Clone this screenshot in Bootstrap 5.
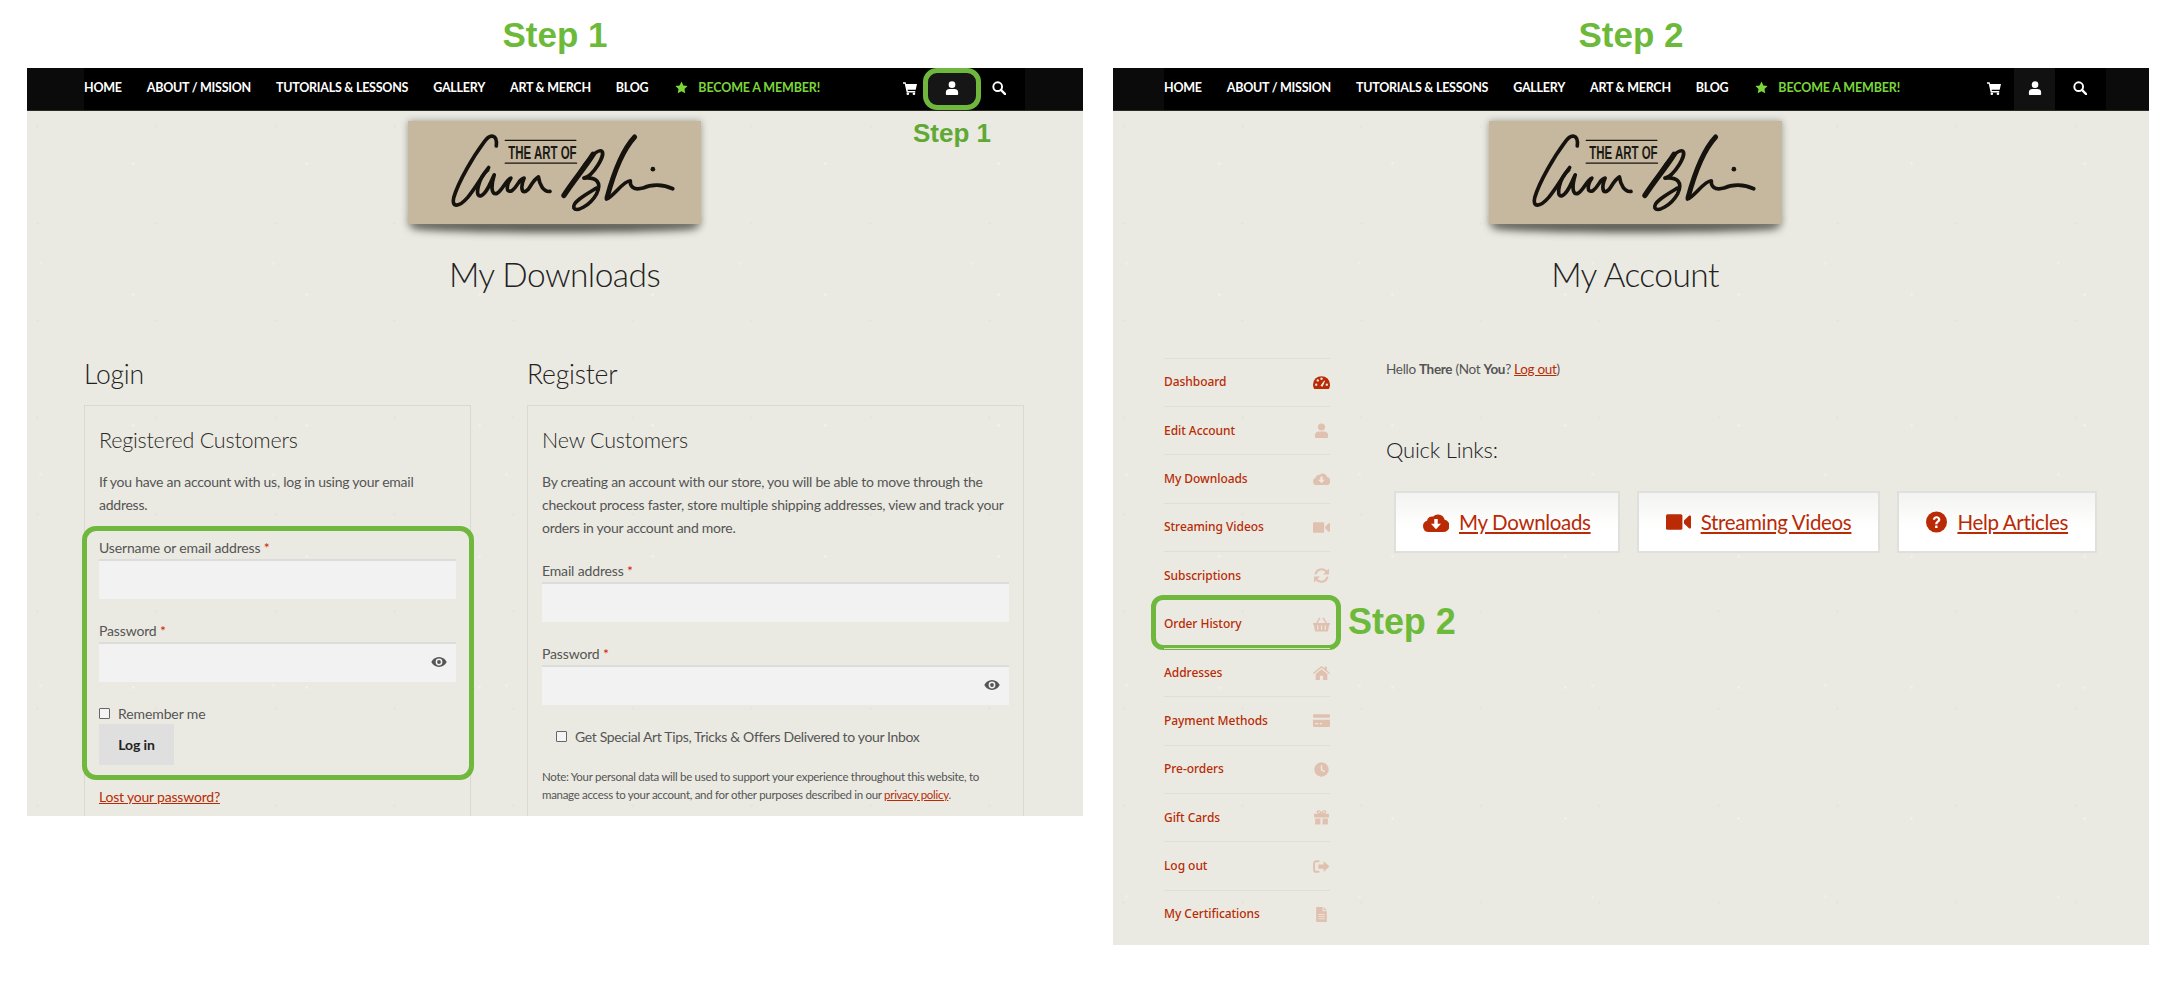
<!DOCTYPE html>
<html lang="en">
<head>
<meta charset="UTF-8">
<meta name="viewport" content="width=device-width, initial-scale=1.0">
<title>Downloads - Step 1 and Step 2</title>
<link href="https://cdn.jsdelivr.net/npm/bootstrap@5.3.3/dist/css/bootstrap.min.css" rel="stylesheet">
<style>
    body { background: #fff; font-family: Lato, sans-serif; color: #555; }
    .sheet { padding-left: 27px; gap: 30px; }
    .step-title { height: 68px; margin: 0; text-align: center; font: bold 35px/70px "Liberation Sans", sans-serif; color: #6dba3b; }
    .shot-a { width: 1056px; }
    .shot-b { width: 1036px; }
    .paper {
        background-color: #eaeae2;
        background-image: radial-gradient(circle, #f2f2eb .8px, transparent 1.6px), radial-gradient(circle, #e3e3d9 .8px, transparent 1.6px), radial-gradient(circle, #efefe7 1.2px, transparent 2px);
        background-size: 173px 131px, 119px 97px, 233px 211px;
        background-position: 20px 30px, 70px 10px, 130px 90px;
        overflow: hidden;
    }
    .shot-a .paper { height: 748px; }
    .shot-b .paper { height: 877px; }

    /* top nav */
    .site-nav { --bs-navbar-nav-link-padding-x: 0; height: 43px; background: #0b0b0b; border-bottom: 1px solid #2a2a24; align-items: stretch; padding: 0; }
    .shot-a .nav-inner { margin: 0 58px 0 57px; }
    .shot-b .nav-inner { margin: 0 43px 0 51px; }
    .nav-inner { flex: 1; background: #000; display: flex; justify-content: space-between; height: 42px; }
    .site-nav .nav-link { font-size: 12.5px; font-weight: 700; color: #fff; padding: 0; line-height: 39px; letter-spacing: -.25px; text-transform: uppercase; white-space: nowrap; }
    .site-nav .navbar-nav { gap: 25px; }
    .site-nav .nav-link.member { color: #7bd63a; display: flex; align-items: center; gap: 10px; margin-left: 2px; letter-spacing: -.15px; }
    .nav-tools { display: flex; align-items: center; height: 42px; margin-right: 6px; }
    .tool { width: 41px; height: 42px; display: flex; align-items: center; justify-content: center; color: #fff; padding-bottom: 3px; }
    .tool svg { width: 14px; height: 14px; }
    .tool:last-child { margin-left: 4px; }
    .tool-on { background: #111; }
    .tool-ring { background: #161616; border: 5px solid #6fb83d; border-radius: 14px; width: 58px; margin: 0 -7px 0 -8px; }
    .tool-lead { margin-right: 1px; }

    /* logo and titles */
    .head-a { padding: 0 58px 0 57px; }
    .head-b { padding: 0 43px 0 51px; }
    .logo-tag { position: relative; width: 293px; height: 103px; margin: 10px auto 0; background: #c6b89e; box-shadow: 0 0 7px rgba(0,0,0,.35); }
    .logo-tag::after { content: ""; position: absolute; z-index: 0; left: 3px; right: 3px; bottom: -8px; height: 10px; background: rgba(30,30,22,.8); filter: blur(4px); border-radius: 0 0 50% 50%; }
    .logo-tag svg { display: block; width: 100%; height: 100%; position: relative; z-index: 1; background: #c6b89e; }
    .logo-txt { font: bold 54px "Liberation Sans", sans-serif; fill: #1c1a16; }
    .page-title { font-weight: 300; font-size: 33.5px; line-height: 44px; color: #222; text-align: center; margin: 28px 0 0; letter-spacing: -.55px; }
    .step-note { position: absolute; left: 886px; top: 49px; font: bold 26px/32px "Liberation Sans", sans-serif; color: #5fa934; white-space: nowrap; }

    /* login / register */
    .forms { margin: 62px 58px 0 57px; gap: 56px; }
    .col-login { width: 387px; flex: none; }
    .col-reg { width: 497px; flex: none; }
    .col-head { font-weight: 300; font-size: 26.5px; line-height: 32px; color: #222; margin: 0 0 15px; letter-spacing: -.2px; }
    .box { background: transparent; border: 1px solid #d9d9cf; border-radius: 0; padding: 20px 14px 40px; }
    .box-title { font-weight: 300; font-size: 21.5px; line-height: 28px; color: #2a2a2a; margin: 0 0 15.5px; letter-spacing: -.2px; }
    .copy { font-size: 14px; line-height: 23px; margin: 0 0 20px; color: #555; letter-spacing: -.25px; }
    .fld-label { display: block; font-size: 14px; line-height: 23px; margin: 0; color: #555; letter-spacing: -.15px; }
    .req { color: #d61a0c; }
    .fld { margin-bottom: 20px; position: relative; }
    .fld .form-control { height: 40px; background: #f2f2f2; border: 0; border-top: 2px solid #dcdcdc; border-radius: 0; }
    .eye { position: absolute; right: 9px; bottom: 14px; width: 16px; height: 12px; color: #555; }
    .ring-wrap { position: relative; }
    .ring-wrap::before { content: ""; position: absolute; left: -17px; right: -18px; top: -10px; bottom: -15px; border: 5px solid #6fb83d; border-radius: 14px; pointer-events: none; }
    .tick { display: flex; align-items: center; gap: 8px; font-size: 14px; line-height: 23px; padding: 0; margin: 0; min-height: 0; letter-spacing: -.1px; }
    .tick .form-check-input { width: 11px; height: 11px; margin: 0; float: none; border: 1px solid #666; border-radius: 1px; background-color: #f4f4f4; }
    .tick-reg { margin: 0 0 20px 14px; letter-spacing: -.35px; }
    .btn-login { display: block; width: 75px; height: 41px; padding: 0; margin-top: -1px; background: #e0dfdf; border: 0; border-radius: 0; color: #222; font-size: 14px; font-weight: 700; letter-spacing: -.1px; }
    .lost { display: block; margin-top: 20px; font-size: 14px; line-height: 23px; letter-spacing: -.2px; }
    .note-txt { font-size: 11.5px; line-height: 18px; margin: 0; letter-spacing: -.3px; }
    a { color: #b92a05; }

    /* account */
    .acct { margin: 61.5px 0 0 51px; }
    .side-list { width: 166px; flex: none; }
    .side-list .list-group-item { position: relative; background: transparent; border-color: #dfdfd5; border-width: 1px 0 0; height: 48.4px; padding: 0; display: flex; align-items: center; justify-content: space-between; font-family: "Noto Sans", sans-serif; font-size: 12px; font-weight: 500; color: #b92a05; text-decoration: none; letter-spacing: -.05px; }
    .side-list .list-group-item svg { width: 17px; height: 15px; color: #e0c1b0; --cut: #eaeae2; }
    .side-list .list-group-item.on svg { color: #b92a05; }
    .item-ring { position: absolute; left: -13px; right: -11px; top: -5px; bottom: -2px; border: 5px solid #6fb83d; border-radius: 12px; pointer-events: none; }
    .item-note { position: absolute; left: 184px; top: 2px; font: bold 36px/40px "Liberation Sans", sans-serif; color: #6dba3b; white-space: nowrap; }
    .acct-main { margin-left: 56px; }
    .hello { font-size: 13.5px; line-height: 23px; margin: 0; letter-spacing: -.3px; }
    .hello b { font-weight: 700; }
    .quick-head { font-weight: 300; font-size: 22px; line-height: 30px; color: #222; margin: 54.5px 0 26px; letter-spacing: -.2px; }
    .quick-row { gap: 17px; margin-left: 8px; }
    .quick { height: 62px; padding: 0 27px; background: linear-gradient(#f3f3f1, #fff 60%); border: 2px solid #dfdfdb; color: #b92a05; display: flex; align-items: center; gap: 10px; font-size: 20.5px; letter-spacing: -.33px; white-space: nowrap; --cut: #fff; }
    .quick span { text-decoration: underline; }
    .quick svg { height: 22px; flex: none; }
    .qi-cloud { width: 26px; }
    .qi-video { width: 25px; }
    .qi-help { width: 21px; }
</style>
</head>
<body>

<svg width="0" height="0" class="position-absolute">
    <symbol id="i-user" viewBox="0 0 16 16"><circle cx="8" cy="4.2" r="3.8" fill="currentColor"/><path d="M1 15.2v-2.6C1 10.4 3 9 5 9h6c2 0 4 1.4 4 3.6v2.600c0 .4-.3.8-.8.8H1.800c-.5 0-.8-.4-.8-.8z" fill="currentColor"/></symbol>
    <symbol id="i-cart" viewBox="0 0 16 16"><path d="M0 1.500h3l.5 2H16l-1.500 6.500H5.300l.3 1.500H14V13H4.200L2 3H0z" fill="currentColor"/><circle cx="5.500" cy="14.500" r="1.500" fill="currentColor"/><circle cx="12.500" cy="14.500" r="1.500" fill="currentColor"/></symbol>
    <symbol id="i-search" viewBox="0 0 16 16"><circle cx="6.500" cy="6.500" r="5" fill="none" stroke="currentColor" stroke-width="2.200"/><path d="M10.200 10.200l4.800 4.800" stroke="currentColor" stroke-width="2.600" stroke-linecap="round"/></symbol>
    <symbol id="i-star" viewBox="0 0 16 16"><path d="M8 .5l2.300 4.900 5.200.7-3.800 3.700.9 5.400L8 12.600l-4.600 2.600.9-5.400L.5 6.100l5.200-.7z" fill="currentColor"/></symbol>
    <symbol id="i-eye" viewBox="0 0 16 12"><path d="M8 1C4.500 1 1.700 3.300.3 6c1.400 2.700 4.200 5 7.700 5s6.300-2.300 7.700-5C14.300 3.300 11.500 1 8 1z" fill="currentColor"/><circle cx="8" cy="6" r="3.400" fill="#f2f2f2"/><circle cx="8" cy="6" r="1.900" fill="currentColor"/></symbol>
    <symbol id="i-gauge" viewBox="0 0 16 14"><path d="M8 1a8 8 0 0 1 8 8c0 1.500-.4 2.900-1.100 4H1.100C.4 11.900 0 10.500 0 9a8 8 0 0 1 8-8z" fill="currentColor"/><g fill="#eaeae2"><circle cx="3" cy="9" r="1.100"/><circle cx="4.500" cy="5" r="1.100"/><circle cx="8" cy="3.500" r="1.100"/><circle cx="13" cy="9" r="1.100"/><path d="M7 10l3.500-5 .8.5L9 11z"/></g></symbol>
    <symbol id="i-cloud" viewBox="0 0 18 14"><path d="M4 14a4 4 0 0 1-1.200-7.800A3.500 3.500 0 0 1 7 3.200 4.800 4.800 0 0 1 15 5.500 4.300 4.300 0 0 1 14 14z" fill="currentColor"/><path d="M7.800 5h2.400v3.200H12.500L9 12 5.500 8.200h2.300z" fill="var(--cut)"/></symbol>
    <symbol id="i-video" viewBox="0 0 16 12"><rect x="0" y="1" width="10.500" height="10" rx="1" fill="currentColor"/><path d="M11.500 5l3.200-3c.5-.4 1.300-.1 1.300.6v6.800c0 .7-.8 1-1.300.6l-3.200-3z" fill="currentColor"/></symbol>
    <symbol id="i-sync" viewBox="0 0 16 14"><path d="M2.400 6A5.800 5.800 0 0 1 12.700 3.400" fill="none" stroke="currentColor" stroke-width="2"/><path d="M15 .5V6H9.500z" fill="currentColor"/><path d="M13.600 8A5.800 5.800 0 0 1 3.300 10.600" fill="none" stroke="currentColor" stroke-width="2"/><path d="M1 13.500V8h5.500z" fill="currentColor"/></symbol>
    <symbol id="i-basket" viewBox="0 0 16 14"><path d="M0 5.500h16v1.700h-.7L14 13.500H2L.7 7.200H0z" fill="currentColor"/><path d="M3.300 6L6.500.8M12.700 6L9.500.8" stroke="currentColor" stroke-width="1.300"/><path d="M4.500 8v4M8 8v4M11.500 8v4" stroke="var(--cut)" stroke-width="1.100"/></symbol>
    <symbol id="i-home" viewBox="0 0 16 14"><path d="M8 .8l3 2.500V1.500h2v3.400l3 2.500-.8 1L8 2.600.8 8.400l-.8-1z" fill="currentColor"/><path d="M8 4L2.500 8.500V14h4V10h3v4h4V8.500z" fill="currentColor"/></symbol>
    <symbol id="i-card" viewBox="0 0 16 14"><rect y="1" width="16" height="3.400" rx="1" fill="currentColor"/><path d="M0 6.300h16v5.700c0 .6-.4 1-1 1H1c-.6 0-1-.4-1-1z" fill="currentColor"/><path d="M2 10h3M6.500 10h2" stroke="var(--cut)" stroke-width="1.200"/></symbol>
    <symbol id="i-clock" viewBox="0 0 16 14"><circle cx="8" cy="7" r="6.800" fill="currentColor"/><path d="M8 3v4.300l3 1.700" fill="none" stroke="var(--cut)" stroke-width="1.300"/></symbol>
    <symbol id="i-gift" viewBox="0 0 16 14"><path d="M1 3.500h14v3.500H1zM2 8h5v5.500H2zM9 8h5v5.500H9z" fill="currentColor"/><path d="M8 3.500C6 3.500 4 3 4 1.700 4 .2 7 .3 8 3.500c1-3.200 4-3.300 4-1.800C12 3 10 3.500 8 3.500z" fill="none" stroke="currentColor" stroke-width="1.200"/></symbol>
    <symbol id="i-exit" viewBox="0 0 16 14"><path d="M6 2H3a2 2 0 0 0-2 2v6a2 2 0 0 0 2 2h3" fill="none" stroke="currentColor" stroke-width="1.800"/><path d="M5 5h5V1.800L15.500 7 10 12.200V9H5z" fill="currentColor"/></symbol>
    <symbol id="i-file" viewBox="0 0 16 14"><path d="M3 0h6v4h4v10H3z" fill="currentColor"/><path d="M10 0l3 3h-3z" fill="currentColor"/><path d="M5 7h6M5 9h6M5 11h6" stroke="var(--cut)" stroke-width=".8"/></symbol>
    <symbol id="i-help" viewBox="0 0 16 16"><circle cx="8" cy="8" r="8" fill="currentColor"/><path d="M5.200 6.300C5.400 4.600 6.700 3.700 8.100 3.700c1.600 0 2.800 1 2.800 2.400 0 2-2.200 2.100-2.200 3.700H7c0-2.500 2.100-2.600 2.100-3.700 0-.5-.4-.9-1-.9-.7 0-1.100.4-1.200 1.100z" fill="#fff"/><rect x="6.900" y="10.600" width="1.900" height="1.900" rx=".4" fill="#fff"/></symbol>
    <symbol id="i-sign" viewBox="82 60 883 310">
        <g fill="none" stroke="#16130f" stroke-linecap="round" stroke-linejoin="round">
            <g stroke-width="11">
                <path d="M348 135C352 100 330 95 310 125 280 165 235 240 220 290 212 322 236 320 262 290 290 255 305 225 325 200"/>
                <path d="M322 208C296 228 280 292 302 285 320 278 330 245 342 222 332 255 332 284 350 278 368 268 375 240 392 232 378 252 376 278 395 270 415 255 415 235 432 232 420 260 424 286 445 265 455 250 462 235 475 228 478 250 490 275 510 272"/>
                <path d="M600 215C620 180 650 145 665 150 680 160 640 225 612 232 650 228 668 245 650 280 630 315 590 335 582 322 575 305 620 280 650 262"/>
                <path d="M680 295C700 290 730 240 752 240 750 255 760 270 790 262 815 250 850 250 880 264"/>
            </g>
            <path d="M640 160C615 200 580 240 552 284" stroke-width="16"/>
            <path d="M765 108C735 140 705 205 682 290" stroke-width="15"/>
            <path d="M375 118H588M375 187H590" stroke-width="4"/>
        </g>
        <circle cx="820" cy="205" r="7" fill="#16130f"/>
    </symbol>
</svg>

<div class="sheet d-flex">

    <!-- Step 1 -->
    <div class="shot-a">
        <h2 class="step-title">Step 1</h2>
        <div class="paper position-relative">
            <nav class="site-nav navbar navbar-expand">
                <div class="nav-inner">
                    <ul class="navbar-nav">
                        <li class="nav-item"><a class="nav-link" href="#">Home</a></li>
                        <li class="nav-item"><a class="nav-link" href="#">About / Mission</a></li>
                        <li class="nav-item"><a class="nav-link" href="#">Tutorials &amp; Lessons</a></li>
                        <li class="nav-item"><a class="nav-link" href="#">Gallery</a></li>
                        <li class="nav-item"><a class="nav-link" href="#">Art &amp; Merch</a></li>
                        <li class="nav-item"><a class="nav-link" href="#">Blog</a></li>
                        <li class="nav-item"><a class="nav-link member" href="#"><svg width="13" height="13"><use href="#i-star"/></svg>Become a Member!</a></li>
                    </ul>
                    <div class="nav-tools">
                        <span class="tool tool-lead"><svg><use href="#i-cart"/></svg></span>
                        <span class="tool tool-ring"><svg><use href="#i-user"/></svg></span>
                        <span class="tool"><svg><use href="#i-search"/></svg></span>
                    </div>
                </div>
            </nav>
            <div class="step-note">Step 1</div>
            <div class="head-a">
                <div class="logo-tag"><svg viewBox="0 0 883 310"><use href="#i-sign"/><text x="302" y="115" class="logo-txt" textLength="206" lengthAdjust="spacingAndGlyphs">THE ART OF</text></svg></div>
                <h1 class="page-title">My Downloads</h1>
            </div>

            <div class="forms d-flex">
                <div class="col-login">
                    <h3 class="col-head">Login</h3>
                    <div class="box card">
                        <h4 class="box-title">Registered Customers</h4>
                        <p class="copy">If you have an account with us, log in using your email address.</p>
                        <form class="ring-wrap">
                            <div class="fld">
                                <label class="fld-label">Username or email address <span class="req">*</span></label>
                                <input type="text" class="form-control">
                            </div>
                            <div class="fld">
                                <label class="fld-label">Password <span class="req">*</span></label>
                                <input type="password" class="form-control">
                                <svg class="eye"><use href="#i-eye"/></svg>
                            </div>
                            <label class="tick form-check"><input type="checkbox" class="form-check-input">Remember me</label>
                            <button type="button" class="btn btn-login">Log in</button>
                        </form>
                        <a class="lost" href="#">Lost your password?</a>
                    </div>
                </div>
                <div class="col-reg">
                    <h3 class="col-head">Register</h3>
                    <div class="box card">
                        <h4 class="box-title">New Customers</h4>
                        <p class="copy">By creating an account with our store, you will be able to move through the checkout process faster, store multiple shipping addresses, view and track your orders in your account and more.</p>
                        <div class="fld">
                            <label class="fld-label">Email address <span class="req">*</span></label>
                            <input type="email" class="form-control">
                        </div>
                        <div class="fld">
                            <label class="fld-label">Password <span class="req">*</span></label>
                            <input type="password" class="form-control">
                            <svg class="eye"><use href="#i-eye"/></svg>
                        </div>
                        <label class="tick tick-reg form-check"><input type="checkbox" class="form-check-input">Get Special Art Tips, Tricks &amp; Offers Delivered to your Inbox</label>
                        <p class="note-txt">Note: Your personal data will be used to support your experience throughout this website, to manage access to your account, and for other purposes described in our <a href="#">privacy policy</a>.</p>
                    </div>
                </div>
            </div>
        </div>
    </div>

    <!-- Step 2 -->
    <div class="shot-b">
        <h2 class="step-title">Step 2</h2>
        <div class="paper">
            <nav class="site-nav navbar navbar-expand">
                <div class="nav-inner">
                    <ul class="navbar-nav">
                        <li class="nav-item"><a class="nav-link" href="#">Home</a></li>
                        <li class="nav-item"><a class="nav-link" href="#">About / Mission</a></li>
                        <li class="nav-item"><a class="nav-link" href="#">Tutorials &amp; Lessons</a></li>
                        <li class="nav-item"><a class="nav-link" href="#">Gallery</a></li>
                        <li class="nav-item"><a class="nav-link" href="#">Art &amp; Merch</a></li>
                        <li class="nav-item"><a class="nav-link" href="#">Blog</a></li>
                        <li class="nav-item"><a class="nav-link member" href="#"><svg width="13" height="13"><use href="#i-star"/></svg>Become a Member!</a></li>
                    </ul>
                    <div class="nav-tools">
                        <span class="tool"><svg><use href="#i-cart"/></svg></span>
                        <span class="tool tool-on"><svg><use href="#i-user"/></svg></span>
                        <span class="tool"><svg><use href="#i-search"/></svg></span>
                    </div>
                </div>
            </nav>
            <div class="head-b">
                <div class="logo-tag"><svg viewBox="0 0 883 310"><use href="#i-sign"/><text x="302" y="115" class="logo-txt" textLength="206" lengthAdjust="spacingAndGlyphs">THE ART OF</text></svg></div>
                <h1 class="page-title">My Account</h1>
            </div>

            <div class="acct d-flex">
                <div class="side-list list-group list-group-flush">
                    <a class="list-group-item on" href="#">Dashboard<svg><use href="#i-gauge"/></svg></a>
                    <a class="list-group-item" href="#">Edit Account<svg><use href="#i-user"/></svg></a>
                    <a class="list-group-item" href="#">My Downloads<svg><use href="#i-cloud"/></svg></a>
                    <a class="list-group-item" href="#">Streaming Videos<svg><use href="#i-video"/></svg></a>
                    <a class="list-group-item" href="#">Subscriptions<svg><use href="#i-sync"/></svg></a>
                    <a class="list-group-item" href="#">Order History<svg><use href="#i-basket"/></svg><span class="item-ring"></span><span class="item-note">Step 2</span></a>
                    <a class="list-group-item" href="#">Addresses<svg><use href="#i-home"/></svg></a>
                    <a class="list-group-item" href="#">Payment Methods<svg><use href="#i-card"/></svg></a>
                    <a class="list-group-item" href="#">Pre-orders<svg><use href="#i-clock"/></svg></a>
                    <a class="list-group-item" href="#">Gift Cards<svg><use href="#i-gift"/></svg></a>
                    <a class="list-group-item" href="#">Log out<svg><use href="#i-exit"/></svg></a>
                    <a class="list-group-item" href="#">My Certifications<svg><use href="#i-file"/></svg></a>
                </div>
                <div class="acct-main">
                    <p class="hello">Hello <b>There</b> (Not <b>You</b>? <a href="#">Log out</a>)</p>
                    <h3 class="quick-head">Quick Links:</h3>
                    <div class="quick-row d-flex">
                        <a class="quick text-decoration-none" href="#"><svg class="qi-cloud"><use href="#i-cloud"/></svg><span>My Downloads</span></a>
                        <a class="quick text-decoration-none" href="#"><svg class="qi-video"><use href="#i-video"/></svg><span>Streaming Videos</span></a>
                        <a class="quick text-decoration-none" href="#"><svg class="qi-help"><use href="#i-help"/></svg><span>Help Articles</span></a>
                    </div>
                </div>
            </div>
        </div>
    </div>
</div>

<script src="https://cdn.jsdelivr.net/npm/bootstrap@5.3.3/dist/js/bootstrap.bundle.min.js"></script>
</body>
</html>
